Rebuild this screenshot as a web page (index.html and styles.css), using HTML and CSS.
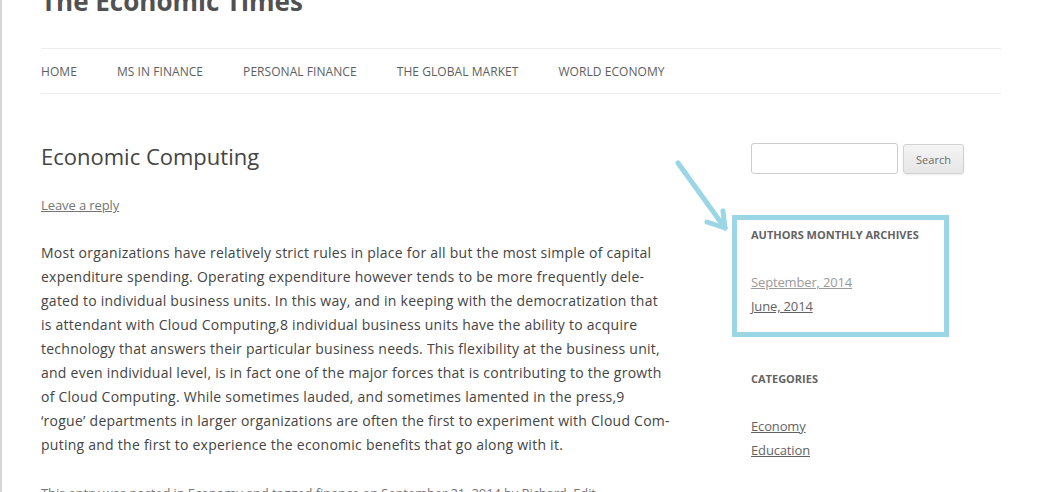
FILE: index.html
```html
<!DOCTYPE html>
<html lang="en">
<head>
<meta charset="utf-8">
<title>Economic Computing | The Economic Times</title>
<link rel="stylesheet" href="styles.css">
</head>
<body>
<div class="page">
  <header class="site-header">
    <h1 class="site-title"><a href="#">The Economic Times</a></h1>
    <nav class="main-nav">
      <ul>
        <li><a href="#">HOME</a></li>
        <li><a href="#">MS IN FINANCE</a></li>
        <li><a href="#">PERSONAL FINANCE</a></li>
        <li><a href="#">THE GLOBAL MARKET</a></li>
        <li><a href="#">WORLD ECONOMY</a></li>
      </ul>
    </nav>
  </header>
  <div class="main">
    <article class="content">
      <h2 class="entry-title">Economic Computing</h2>
      <div class="comments-link"><a href="#">Leave a reply</a></div>
      <p class="entry-text">Most organizations have relatively strict rules in place for all but the most simple of capital<br>expenditure spending. Operating expenditure however tends to be more frequently dele-<br>gated to individual business units. In this way, and in keeping with the democratization that<br>is attendant with Cloud Computing,8 individual business units have the ability to acquire<br>technology that answers their particular business needs. This flexibility at the business unit,<br>and even individual level, is in fact one of the major forces that is contributing to the growth<br>of Cloud Computing. While sometimes lauded, and sometimes lamented in the press,9<br>‘rogue’ departments in larger organizations are often the first to experiment with Cloud Com-<br>puting and the first to experience the economic benefits that go along with it.</p>
      <footer class="entry-meta">This entry was posted in <a href="#">Economy</a> and tagged <a href="#">finance</a> on <a href="#">September 21, 2014</a> by <a href="#">Richard</a>. <a href="#">Edit</a></footer>
    </article>
    <aside class="sidebar">
      <div class="widget search-widget">
        <form class="search-form">
          <input class="search-input" type="text">
          <button class="search-btn" type="button">Search</button>
        </form>
      </div>
      <div class="widget archive-widget">
        <h3 class="widget-title">Authors Monthly Archives</h3>
        <ul class="widget-list">
          <li><a class="visited" href="#">September, 2014</a></li>
          <li><a href="#">June, 2014</a></li>
        </ul>
        <div class="highlight-box"></div>
        <svg class="highlight-arrow" width="58" height="74" viewBox="0 0 58 74">
          <g fill="none" stroke="#9ad6e5" stroke-width="5" stroke-linecap="round" stroke-linejoin="round">
            <path d="M5 5 L52 70"/>
            <path d="M34 64 L52 70 L50 53"/>
          </g>
        </svg>
      </div>
      <div class="widget">
        <h3 class="widget-title">Categories</h3>
        <ul class="widget-list">
          <li><a href="#">Economy</a></li>
          <li><a href="#">Education</a></li>
        </ul>
      </div>
    </aside>
  </div>
</div>
</body>
</html>
```
FILE: styles.css
```css
html, body {
  margin: 0;
  padding: 0;
  background: #fff;
  overflow: hidden;
}
body {
  font-family: "Open Sans", "Liberation Sans", sans-serif;
  color: #444;
  font-size: 14px;
}
a { color: #757575; }
.page {
  border-left: 2px solid #d6d6d6;
  padding-left: 39px;
  width: 960px;
  min-height: 492px;
  box-sizing: content-box;
}
.site-header {
  margin-top: -23px;
}
.site-title {
  margin: 0;
  font-size: 26px;
  line-height: 48px;
  font-weight: bold;
}
.site-title a {
  color: #515151;
  text-decoration: none;
}
.main-nav {
  margin-top: 23px;
  border-top: 1px solid #ededed;
  border-bottom: 1px solid #ededed;
}
.main-nav ul {
  list-style: none;
  margin: 0;
  padding: 0;
  display: flex;
  gap: 40px;
}
.main-nav a {
  display: block;
  font-size: 12px;
  line-height: 43px;
  padding-top: 1px;
  letter-spacing: 0.06px;
  color: #5e5e5e;
  text-decoration: none;
}
.main {
  display: flex;
  justify-content: space-between;
  padding-top: 49px;
}
.content {
  width: 625px;
}
.entry-title {
  margin: 0;
  font-size: 22px;
  line-height: 1.2;
  font-weight: normal;
  color: #444;
}
.comments-link {
  margin-top: 24px;
  font-size: 13px;
  line-height: 24px;
  letter-spacing: -0.1px;
}
.entry-text {
  margin: 24px 0 24px;
  line-height: 24px;
  letter-spacing: 0.25px;
  white-space: nowrap;
}
.entry-meta {
  font-size: 13px;
  line-height: 24px;
  letter-spacing: -0.12px;
  color: #757575;
}
.sidebar {
  width: 250px;
}
.widget {
  margin-bottom: 48px;
  position: relative;
}
.search-widget {
  margin-bottom: 49px;
}
.archive-widget {
  margin-bottom: 49px;
}
.search-form {
  display: flex;
  align-items: flex-start;
  gap: 5px;
}
.search-input {
  width: 147px;
  height: 31px;
  box-sizing: border-box;
  border: 1px solid #ccc;
  border-radius: 3px;
  padding: 6px;
  margin: 0;
  background: #fff;
}
.search-btn {
  width: 61px;
  height: 30px;
  margin: 1px 0 0;
  box-sizing: border-box;
  border: 1px solid #d2d2d2;
  border-radius: 3px;
  background: linear-gradient(to bottom, #f4f4f4, #e6e6e6);
  box-shadow: 0 1px 2px rgba(64, 64, 64, 0.1);
  font-family: "Open Sans", "Liberation Sans", sans-serif;
  font-size: 11px;
  color: #6a6a6a;
  padding: 0;
}
.widget-title {
  margin: 0 0 23px;
  font-size: 11px;
  line-height: 24px;
  font-weight: bold;
  text-transform: uppercase;
  color: #636363;
}
.widget-list {
  list-style: none;
  margin: 0;
  padding: 0;
}
.widget-list li {
  font-size: 13px;
  line-height: 24px;
  letter-spacing: -0.15px;
}
.widget-list a {
  color: #636363;
}
.widget-list a.visited {
  color: #9a9a9a;
}
.highlight-box {
  position: absolute;
  left: -19px;
  top: -8px;
  width: 217px;
  height: 122px;
  box-sizing: border-box;
  border: 5px solid #9ad6e5;
  pointer-events: none;
}
.highlight-arrow {
  position: absolute;
  left: -78px;
  top: -65px;
}
```
